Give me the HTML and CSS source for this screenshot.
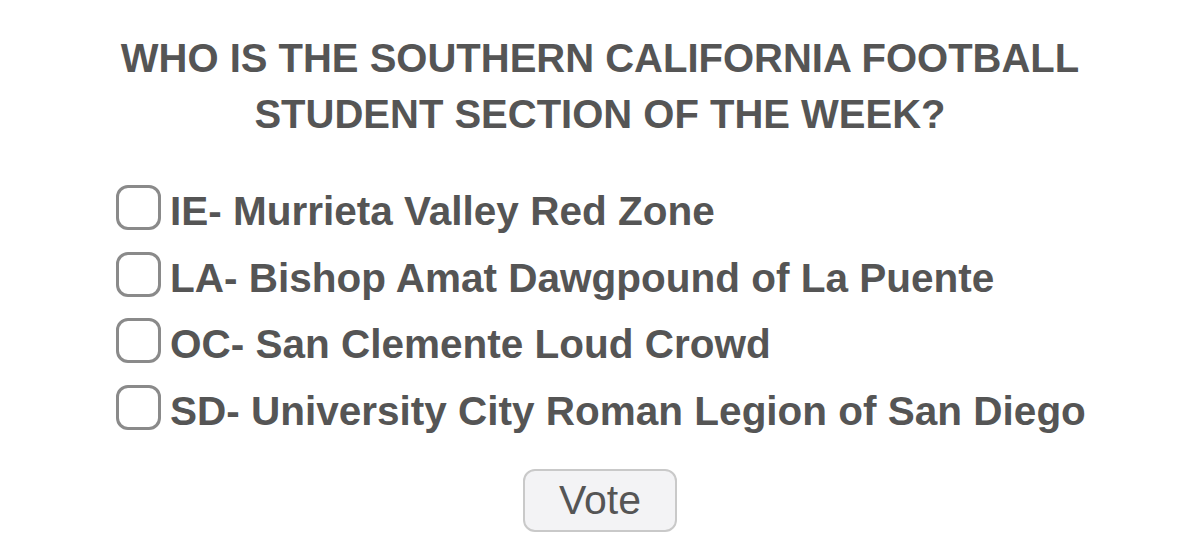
FILE: index.html
```html
<!DOCTYPE html>
<html>
<head>
<meta charset="utf-8">
<link rel="stylesheet" href="styles.css">
</head>
<body>
<form class="poll">
  <h1 class="poll-title">WHO IS THE SOUTHERN CALIFORNIA FOOTBALL<br>STUDENT SECTION OF THE WEEK?</h1>
  <ul class="poll-options">
    <li class="poll-option"><span class="box"></span><span class="label">IE- Murrieta Valley Red Zone</span></li>
    <li class="poll-option"><span class="box"></span><span class="label">LA- Bishop Amat Dawgpound of La Puente</span></li>
    <li class="poll-option"><span class="box"></span><span class="label">OC- San Clemente Loud Crowd</span></li>
    <li class="poll-option"><span class="box"></span><span class="label">SD- University City Roman Legion of San Diego</span></li>
  </ul>
  <div class="poll-actions"><button type="button" class="vote">Vote</button></div>
</form>
</body>
</html>
```

FILE: styles.css
```css
html, body {
  margin: 0;
  padding: 0;
  background: #ffffff;
}

body {
  font-family: "Liberation Sans", Arial, sans-serif;
  color: #555555;
}

.poll {
  width: 1200px;
  height: 547px;
  display: flex;
  flex-direction: column;
  align-items: center;
  padding-top: 30px;
  box-sizing: border-box;
}

.poll-title {
  margin: 0;
  font-size: 40px;
  font-weight: bold;
  line-height: 56px;
  text-align: center;
}

.poll-options {
  list-style: none;
  margin: 43px 0 0 0;
  padding: 0;
  align-self: flex-start;
  padding-left: 116px;
  display: flex;
  flex-direction: column;
  gap: 21.7px;
}

.poll-option {
  display: flex;
  align-items: flex-start;
  gap: 9px;
  height: 45px;
}

.box {
  width: 39px;
  height: 39px;
  border: 3px solid #8a8a8a;
  border-radius: 12px;
  flex: none;
}

.label {
  font-size: 40.5px;
  font-weight: bold;
  line-height: 45px;
  margin-top: 4px;
}

.poll-actions {
  margin-top: 39px;
}

.vote {
  width: 154px;
  height: 63px;
  border: 2px solid #c9c9c9;
  border-radius: 12px;
  background: #f3f3f5;
  font-family: "Liberation Sans", Arial, sans-serif;
  font-size: 41px;
  color: #555555;
  padding: 0;
}
```
